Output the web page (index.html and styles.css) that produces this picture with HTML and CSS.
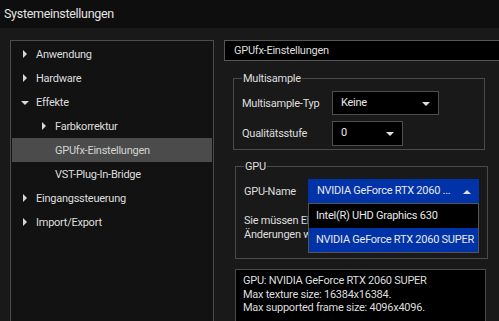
FILE: index.html
```html
<!DOCTYPE html>
<html lang="de">
<head>
    <meta charset="UTF-8">
    <title>Systemeinstellungen</title>
    <link rel="stylesheet" href="styles.css">
</head>
<body>
    <div class="titlebar">Systemeinstellungen</div>

    <div class="main">
        <div class="tree">
            <div class="row"><span class="arrow closed"></span>Anwendung</div>
            <div class="row"><span class="arrow closed"></span>Hardware</div>
            <div class="row"><span class="arrow open"></span>Effekte</div>
            <div class="row sub"><span class="arrow closed"></span>Farbkorrektur</div>
            <div class="row sub selected"><span class="arrow"></span>GPUfx-Einstellungen</div>
            <div class="row sub"><span class="arrow"></span>VST-Plug-In-Bridge</div>
            <div class="row"><span class="arrow closed"></span>Eingangssteuerung</div>
            <div class="row"><span class="arrow closed"></span>Import/Export</div>
        </div>

        <div class="settings">
            <div class="page-title">GPUfx-Einstellungen</div>

            <fieldset class="group multisample">
                <legend>Multisample</legend>
                <div class="field">
                    <label>Multisample-Typ</label>
                    <div class="select wide">Keine<span class="caret down"></span></div>
                </div>
                <div class="field">
                    <label>Qualitätsstufe</label>
                    <div class="select narrow">0<span class="caret down"></span></div>
                </div>
            </fieldset>

            <fieldset class="group gpu">
                <legend>GPU</legend>
                <div class="field">
                    <label>GPU-Name</label>
                    <div class="select gpu-select">NVIDIA GeForce RTX 2060 ...<span class="caret up"></span>
                        <div class="dropdown">
                            <div class="option">Intel(R) UHD Graphics 630</div>
                            <div class="option active">NVIDIA GeForce RTX 2060 SUPER</div>
                        </div>
                    </div>
                </div>
                <p class="note">Sie müssen EDIUS neu starten, damit die<br>Änderungen wirksam werden.</p>
            </fieldset>

            <div class="info">
                GPU: NVIDIA GeForce RTX 2060 SUPER<br>
                Max texture size: 16384x16384.<br>
                Max supported frame size: 4096x4096.
            </div>
        </div>
    </div>
</body>
</html>
```

FILE: styles.css
```css
html, body {
    margin: 0;
    height: 100%;
}
body {
    font-family: Roboto, "Liberation Sans", sans-serif;
    font-size: 11px;
    letter-spacing: -0.25px;
    color: #dedede;
    background-color: #191919;
    overflow: hidden;
}
.titlebar {
    height: 28px;
    line-height: 27px;
    padding-left: 4px;
    font-size: 12.5px;
    letter-spacing: -0.3px;
    background-color: #0e0e0e;
    color: #e4e4e4;
}
.main {
    display: flex;
    gap: 10px;
    padding: 12px 0 0 10px;
}

/* left tree */
.tree {
    flex: none;
    width: 200px;
    height: 300px;
    padding: 1px;
    border: 1px solid #4c4c4c;
    background-color: #121212;
}
.row {
    display: flex;
    align-items: center;
    height: 24px;
    padding-left: 10px;
}
.row.sub {
    padding-left: 29px;
}
.row.selected {
    background-color: #4b4b4b;
    color: #d4d4d4;
}
.arrow {
    position: relative;
    flex: none;
    width: 14px;
    height: 24px;
}
.arrow.closed::before {
    content: "";
    position: absolute;
    left: 1px;
    top: 8px;
    border-left: 4px solid #d8d8d8;
    border-top: 4px solid transparent;
    border-bottom: 4px solid transparent;
}
.arrow.open::before {
    content: "";
    position: absolute;
    left: -1px;
    top: 11px;
    border-top: 4px solid #d8d8d8;
    border-left: 4px solid transparent;
    border-right: 4px solid transparent;
}

/* right settings */
.settings {
    flex: none;
    width: 290px;
}
.page-title {
    height: 19px;
    line-height: 19px;
    padding-left: 9px;
    border: 1px solid #565656;
    background-color: #000;
}
.group {
    margin: 0;
    padding: 5px 8px 0 8px;
    border: 1px solid #4a4a4a;
}
.group legend {
    padding: 0 1px;
    line-height: 13px;
}
.multisample {
    width: 234px;
    height: 71px;
    margin: 11px 0 0 9px;
}
.gpu {
    width: 234px;
    height: 92px;
    margin: 10px 0 0 11px;
}
.field {
    display: flex;
    align-items: center;
    height: 26px;
    margin-bottom: 4px;
}
.field label {
    width: 90px;
}
.gpu .field label {
    width: 64px;
}
.select {
    position: relative;
    box-sizing: border-box;
    height: 24px;
    line-height: 22px;
    padding-left: 8px;
    border: 1px solid #4d4d4d;
    background-color: #000;
    color: #e8e8e8;
}
.select.wide {
    width: 107px;
}
.select.narrow {
    width: 71px;
    height: 25px;
}
.gpu-select {
    width: 171px;
    border-color: #0033a8;
    background-color: #0033a8;
}
.caret {
    position: absolute;
    right: 8px;
    top: 10px;
}
.caret.down {
    border-top: 4px solid #e0e0e0;
    border-left: 4px solid transparent;
    border-right: 4px solid transparent;
}
.caret.up {
    right: 7px;
    border-bottom: 4px solid #e0e0e0;
    border-left: 4px solid transparent;
    border-right: 4px solid transparent;
}
.dropdown {
    position: absolute;
    left: -1px;
    top: 23px;
    z-index: 2;
    width: 171px;
    box-sizing: border-box;
    border: 1px solid #555;
    background-color: #000;
}
.option {
    height: 24px;
    line-height: 24px;
    padding-left: 7px;
    white-space: nowrap;
    overflow: hidden;
}
.option.active {
    background-color: #0033a8;
}
.note {
    margin: 10px 0 0 0;
    line-height: 14px;
}
.info {
    box-sizing: border-box;
    width: 251px;
    height: 70px;
    margin: 10px 0 0 11px;
    padding: 4px 7px;
    line-height: 13.5px;
    border: 1px solid #4a4a4a;
    background-color: #000;
}
```
